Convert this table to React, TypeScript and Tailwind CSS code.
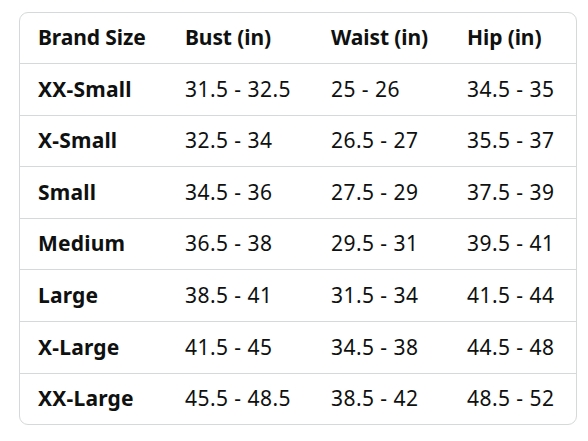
const rows = [
  ["XX-Small", "31.5 - 32.5", "25 - 26", "34.5 - 35"],
  ["X-Small", "32.5 - 34", "26.5 - 27", "35.5 - 37"],
  ["Small", "34.5 - 36", "27.5 - 29", "37.5 - 39"],
  ["Medium", "36.5 - 38", "29.5 - 31", "39.5 - 41"],
  ["Large", "38.5 - 41", "31.5 - 34", "41.5 - 44"],
  ["X-Large", "41.5 - 45", "34.5 - 38", "44.5 - 48"],
  ["XX-Large", "45.5 - 48.5", "38.5 - 42", "48.5 - 52"],
];

const cols = "grid grid-cols-[147px_146px_136px_1fr] items-center";

export default function App() {
  return (
    <div
      className="w-[588px] h-[441px] bg-white pt-[12px] pl-[19px] text-[#0f1111]"
      style={{ fontFamily: '"Noto Sans", "Open Sans", sans-serif' }}
    >
      <div className="w-[558px] border border-[#d5d9d9] rounded-[9px] overflow-hidden">
        <div className={`${cols} h-[51px] border-b border-[#d5d9d9] font-bold text-[21px] tracking-[-0.1px]`}>
          <div className="pl-[18px]">Brand Size</div>
          <div className="pl-[18px]">Bust (in)</div>
          <div className="pl-[18px]">Waist (in)</div>
          <div className="pl-[18px]">Hip (in)</div>
        </div>
        {rows.map((r, i) => (
          <div
            key={r[0]}
            className={`${cols} text-[21px] ${i < rows.length - 1 ? "h-[51.6px] border-b border-[#d5d9d9]" : "h-[50.5px]"}`}
          >
            <div className="pl-[18px] font-bold tracking-[0.2px]">{r[0]}</div>
            <div className="pl-[18px] tracking-[0.45px]">{r[1]}</div>
            <div className="pl-[18px] tracking-[0.45px]">{r[2]}</div>
            <div className="pl-[18px] tracking-[0.45px]">{r[3]}</div>
          </div>
        ))}
      </div>
    </div>
  );
}
